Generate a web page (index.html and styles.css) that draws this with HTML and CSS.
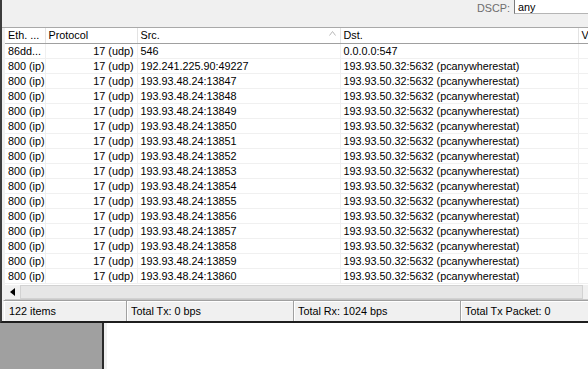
FILE: index.html
```html
<!DOCTYPE html>
<html lang="en">
<head>
    <meta charset="UTF-8">
    <title>Torch</title>
    <link rel="stylesheet" href="styles.css">
</head>
<body>
    <div class="window">
        <div class="toolbar">
            <span class="field-label">DSCP:</span>
            <div class="field-box">any</div>
        </div>

        <div class="grid">
            <table class="list">
                <colgroup>
                    <col class="c-eth">
                    <col class="c-proto">
                    <col class="c-src">
                    <col class="c-dst">
                    <col class="c-v">
                </colgroup>
                <thead>
                    <tr>
                        <th>Eth. ...</th>
                        <th>Protocol</th>
                        <th class="sorted">Src.
                            <svg class="sort-mark" width="7" height="5" viewBox="0 0 7 5"><path d="M0.5 4.5 L3.5 0.5 L6.5 4.5" fill="none" stroke="#b8b8b8" stroke-width="1"/></svg>
                        </th>
                        <th>Dst.</th>
                        <th>V</th>
                    </tr>
                </thead>
                <tbody id="rows">
                    <tr><td>86dd...</td><td class="num">17 (udp)</td><td>546</td><td>0.0.0.0:547</td><td></td></tr>
                    <tr><td>800 (ip)</td><td class="num">17 (udp)</td><td>192.241.225.90:49227</td><td>193.93.50.32:5632 (pcanywherestat)</td><td></td></tr>
                </tbody>
            </table>
        </div>

        <div class="hscroll">
            <div class="arrow-btn"><span class="arrow-left"></span></div>
            <div class="track"><div class="thumb"></div></div>
        </div>

        <div class="status">
            <div class="panel p1">122 items</div>
            <div class="panel p2">Total Tx: 0 bps</div>
            <div class="panel p3">Total Rx: 1024 bps</div>
            <div class="panel p4">Total Tx Packet: 0</div>
        </div>
    </div>

    <div class="below">
        <div class="grey-pane"></div>
        <div class="divider"></div>
        <div class="white-pane"></div>
    </div>

    <script>
        let tbody = document.getElementById("rows");
        for (let port = 13847; port <= 13860; port++) {
            let tr = document.createElement("tr");
            tr.innerHTML = "<td>800 (ip)</td><td class=\"num\">17 (udp)</td><td>193.93.48.24:" + port +
                "</td><td>193.93.50.32:5632 (pcanywherestat)</td><td></td>";
            tbody.appendChild(tr);
        }
    </script>
</body>
</html>
```

FILE: styles.css
```css
html, body {
    margin: 0;
    padding: 0;
}
body {
    width: 588px;
    height: 369px;
    overflow: hidden;
    background: #ffffff;
    font-family: "Liberation Sans", Arial, sans-serif;
    font-size: 10.8px;
    color: #000;
}
.window {
    height: 321px;
    background: #f0f0f0;
    border-left: 2px solid #3c3c3c;
    border-bottom: 2px solid #1e1e1e;
    overflow: hidden;
}
.toolbar {
    display: flex;
    justify-content: flex-end;
    align-items: flex-start;
    border-bottom: 1px solid #a9a9a9;
    box-sizing: border-box;
    height: 28px;
}
.field-label {
    color: #6d6d6d;
    margin-top: 1px;
    line-height: 14px;
    margin-right: 4px;
}
.field-box {
    width: 70px;
    height: 14px;
    margin-top: -1px;
    background: #fff;
    border-left: 1px solid #7a7a7a;
    border-bottom: 1px solid #b5b5b5;
    padding-left: 3px;
    line-height: 16px;
}
.grid {
    margin-left: 3px;
    background: #fff;
    overflow: hidden;
    height: 257px;
}
.list {
    border-collapse: collapse;
    table-layout: fixed;
    width: 620px;
}
.c-eth { width: 40px; }
.c-proto { width: 92px; }
.c-src { width: 203px; }
.c-dst { width: 238px; }
.c-v { width: 47px; }
.list th {
    font-weight: normal;
    text-align: left;
    height: 15px;
    padding: 0 0 0 3px;
    line-height: 15px;
    border-bottom: 1px solid #a0a0a0;
    border-right: 1px solid #e3e3e3;
    white-space: nowrap;
    overflow: hidden;
    position: relative;
}
.sort-mark {
    position: absolute;
    right: 4px;
    top: 3px;
}
.list td {
    height: 14px;
    padding: 0 0 0 3px;
    line-height: 14px;
    border-bottom: 1px solid #f0f0f0;
    border-right: 1px solid #f0f0f0;
    white-space: nowrap;
    overflow: hidden;
}
.list td.num {
    text-align: right;
    padding: 0 3px 0 0;
}
.hscroll {
    display: flex;
    height: 14px;
    margin-left: 3px;
    border-bottom: 1px solid #c8c8c8;
}
.arrow-btn {
    width: 15px;
    display: flex;
    align-items: center;
    justify-content: center;
    background: #f0f0f0;
}
.arrow-left {
    width: 0;
    height: 0;
    border-top: 4px solid transparent;
    border-bottom: 4px solid transparent;
    border-right: 5px solid #000;
}
.track {
    flex: 1;
    display: flex;
    background: #f0f0f0;
}
.thumb {
    width: 563px;
    background: #e6e6e6;
    border: 1px solid #d2d2d2;
    box-sizing: border-box;
}
.status {
    display: flex;
    height: 21px;
    margin-left: 1px;
}
.panel {
    box-sizing: border-box;
    padding: 3px 0 0 4px;
    line-height: 14px;
    border-top: 1px solid #a0a0a0;
    border-left: 1px solid #a0a0a0;
    box-shadow: inset 1px 1px 0 #ffffff;
    white-space: nowrap;
}
.p1 { width: 123px; padding-left: 5px; border-left-color: #f0f0f0; }
.p2 { width: 167px; }
.p3 { width: 167px; }
.p4 { flex: 1; }
.below {
    display: flex;
    height: 46px;
}
.grey-pane {
    width: 102px;
    background: #a0a0a0;
}
.divider {
    width: 2px;
    background: #2a2a2a;
    border-right: 3px solid #f0f0f0;
}
.white-pane {
    flex: 1;
    background: #fff;
}
```
